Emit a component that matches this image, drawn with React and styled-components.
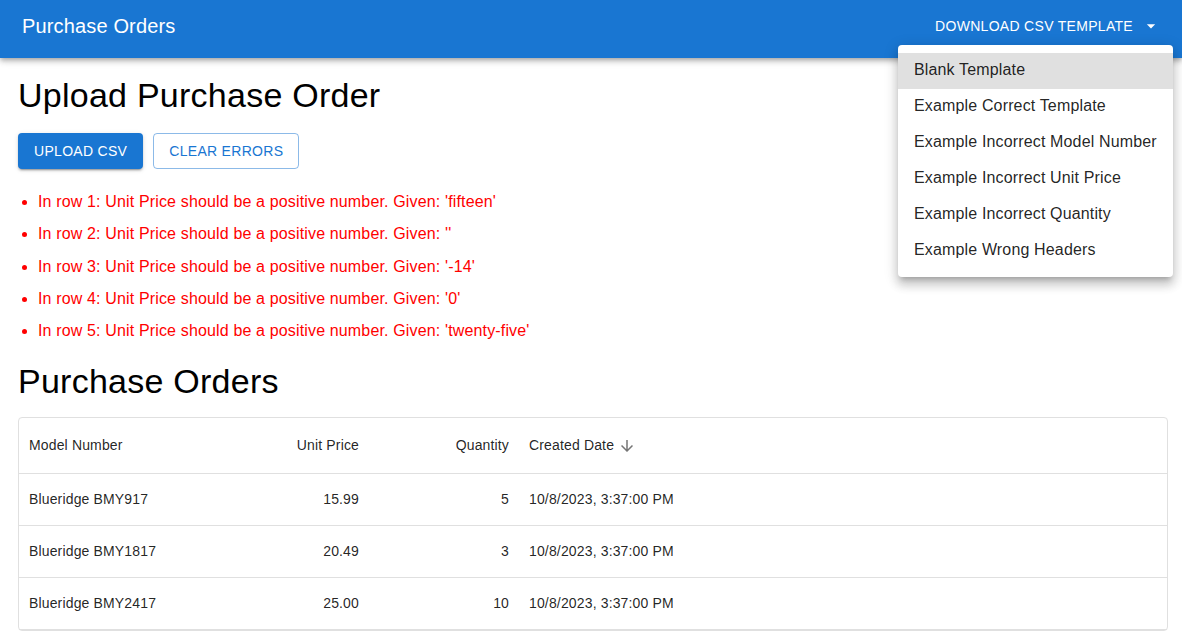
import styled, { createGlobalStyle } from 'styled-components';

const errors = [
  "In row 1: Unit Price should be a positive number. Given: 'fifteen'",
  "In row 2: Unit Price should be a positive number. Given: ''",
  "In row 3: Unit Price should be a positive number. Given: '-14'",
  "In row 4: Unit Price should be a positive number. Given: '0'",
  "In row 5: Unit Price should be a positive number. Given: 'twenty-five'",
];

const templates = [
  'Blank Template',
  'Example Correct Template',
  'Example Incorrect Model Number',
  'Example Incorrect Unit Price',
  'Example Incorrect Quantity',
  'Example Wrong Headers',
];

const orders = [
  { model: 'Blueridge BMY917', price: '15.99', qty: 5, date: '10/8/2023, 3:37:00 PM' },
  { model: 'Blueridge BMY1817', price: '20.49', qty: 3, date: '10/8/2023, 3:37:00 PM' },
  { model: 'Blueridge BMY2417', price: '25.00', qty: 10, date: '10/8/2023, 3:37:00 PM' },
];

const App = () => {
  return (
    <>
      <GlobalStyle />
      <AppBar>
        <Title>Purchase Orders</Title>
        <MenuButton>
          DOWNLOAD CSV TEMPLATE
          <svg width="20" height="20" viewBox="0 0 24 24">
            <path d="M7 10l5 5 5-5z" fill="#fff" />
          </svg>
        </MenuButton>
      </AppBar>

      <Menu>
        {templates.map((t, i) => (
          <MenuItem key={t} $active={i === 0}>{t}</MenuItem>
        ))}
      </Menu>

      <Main>
        <Heading>Upload Purchase Order</Heading>
        <Actions>
          <Button $variant="contained">UPLOAD CSV</Button>
          <Button $variant="outlined">CLEAR ERRORS</Button>
        </Actions>
        <ErrorList>
          {errors.map((e) => (
            <ErrorItem key={e}>{e}</ErrorItem>
          ))}
        </ErrorList>

        <Heading $second>Purchase Orders</Heading>
        <Grid>
          <Row $header>
            <Cell $w={200}>Model Number</Cell>
            <Cell $w={150} $right>Unit Price</Cell>
            <Cell $w={150} $right>Quantity</Cell>
            <Cell>
              Created Date
              <svg width="18" height="18" viewBox="0 0 24 24">
                <path d="M20 12l-1.41-1.41L13 16.17V4h-2v12.17l-5.58-5.59L4 12l8 8 8-8z" fill="#757575" />
              </svg>
            </Cell>
          </Row>
          {orders.map((o) => (
            <Row key={o.model}>
              <Cell $w={200}>{o.model}</Cell>
              <Cell $w={150} $right>{o.price}</Cell>
              <Cell $w={150} $right>{o.qty}</Cell>
              <Cell>{o.date}</Cell>
            </Row>
          ))}
        </Grid>
      </Main>
    </>
  );
};

export default App;

const GlobalStyle = createGlobalStyle`
  body {
    margin: 0;
    font-family: "Liberation Sans", Arial, sans-serif;
    background: #fff;
    color: #000;
  }
`;

const AppBar = styled.header`
  height: 58px;
  padding: 0 21px 6px 22px;
  box-sizing: border-box;
  background: #1976d2;
  color: #fff;
  display: flex;
  align-items: center;
  justify-content: space-between;
  box-shadow: 0px 2px 4px -1px rgba(0,0,0,0.2), 0px 4px 5px 0px rgba(0,0,0,0.14), 0px 1px 10px 0px rgba(0,0,0,0.12);
  position: relative;
  z-index: 2;
`;

const Title = styled.div`
  font-size: 20px;
  line-height: 32px;
  letter-spacing: 0.15px;
`;

const MenuButton = styled.div`
  display: flex;
  align-items: center;
  gap: 8px;
  font-size: 14px;
  letter-spacing: 0.3px;

  svg {
    margin-top: -1px;
  }
`;

const Menu = styled.ul`
  position: absolute;
  top: 45px;
  left: 898px;
  width: 275px;
  margin: 0;
  padding: 8px 0;
  list-style: none;
  background: #fff;
  border-radius: 4px;
  box-shadow: 0px 5px 5px -3px rgba(0,0,0,0.2), 0px 8px 10px 1px rgba(0,0,0,0.14), 0px 3px 14px 2px rgba(0,0,0,0.12);
  z-index: 5;
`;

const MenuItem = styled.li`
  height: 36px;
  box-sizing: border-box;
  padding: 0 16px 2px;
  display: flex;
  align-items: center;
  font-size: 16px;
  letter-spacing: 0.15px;
  color: rgba(0, 0, 0, 0.87);
  background: ${(p) => (p.$active ? '#e0e0e0' : 'transparent')};
`;

const Main = styled.main`
  padding: 0 14px 0 18px;
`;

const Heading = styled.h1`
  margin: 0;
  font-size: 34px;
  font-weight: 400;
  line-height: 42px;
  letter-spacing: 0.25px;
  padding: ${(p) => (p.$second ? '13px 0 16px' : '16px 0 16px')};
`;

const Actions = styled.div`
  display: flex;
  gap: 10px;
  margin-top: 1px;
`;

const Button = styled.div`
  height: 36px;
  box-sizing: border-box;
  padding: 0 16px;
  display: flex;
  align-items: center;
  border-radius: 4px;
  font-size: 14px;
  letter-spacing: 0.3px;
  ${(p) =>
    p.$variant === 'contained'
      ? `
    background: #1976d2;
    color: #fff;
    box-shadow: 0px 3px 1px -2px rgba(0,0,0,0.2), 0px 2px 2px 0px rgba(0,0,0,0.14), 0px 1px 5px 0px rgba(0,0,0,0.12);
  `
      : `
    border: 1px solid rgba(25, 118, 210, 0.5);
    color: #1976d2;
    padding: 0 15px;
  `}
`;

const ErrorList = styled.ul`
  margin: 17px 0 0;
  padding-left: 20px;
  color: #ff0000;
  font-size: 16px;
  letter-spacing: 0.15px;
`;

const ErrorItem = styled.li`
  line-height: 32.3px;
`;

const Grid = styled.div`
  border: 1px solid #e0e0e0;
  border-radius: 4px;
  font-size: 14px;
  letter-spacing: 0.15px;
  color: rgba(0, 0, 0, 0.87);
  margin-top: -1px;
`;

const Row = styled.div`
  display: flex;
  height: ${(p) => (p.$header ? '55px' : '51px')};
  border-bottom: 1px solid #e0e0e0;
  font-weight: ${(p) => (p.$header ? 500 : 400)};
`;

const Cell = styled.div`
  ${(p) => (p.$w ? `width: ${p.$w}px;` : 'flex: 1;')}
  box-sizing: border-box;
  padding: 0 10px 2px;
  display: flex;
  align-items: center;
  justify-content: ${(p) => (p.$right ? 'flex-end' : 'flex-start')};
  gap: 4px;

  svg {
    margin-top: 2px;
  }
`;
